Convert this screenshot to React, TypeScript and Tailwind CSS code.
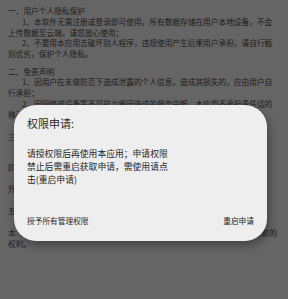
const bgFont = { fontFamily: '"Noto Sans CJK SC", "Noto Sans", sans-serif' };

function Line({ children, indent = false, className = '' }: { children: React.ReactNode; indent?: boolean; className?: string }) {
  return (
    <div className={`h-[10.8px] leading-[10.8px] whitespace-nowrap ${indent ? 'pl-[14px]' : ''} ${className}`}>
      {children}
    </div>
  );
}

function PermissionDialog() {
  return (
    <div className="absolute left-[14px] top-[105px] w-[253px] rounded-[22px] bg-[#eeeeee] pt-[11px] pb-[15px] px-[13px] shadow-[2px_4px_10px_rgba(0,0,0,0.35)]">
      <div className="text-[11px] leading-[14px] text-[#2a2a2a]">权限申请:</div>
      <div className="mt-[17px] text-[8.8px] leading-[13px] text-[#1e1e1e]">
        <div className="whitespace-nowrap">请授权限后再使用本应用；申请权限</div>
        <div className="whitespace-nowrap">禁止后需重启获取申请，需使用请点</div>
        <div className="whitespace-nowrap">击(重启申请)</div>
      </div>
      <div className="mt-[30px] flex justify-between text-[7.7px] leading-[10px] text-[#2a2a2a]">
        <span>授予所有管理权限</span>
        <span>重启申请</span>
      </div>
    </div>
  );
}

export default function App() {
  return (
    <div className="relative w-[288px] h-[299px] overflow-hidden bg-[#656565]" style={bgFont}>
      <div className="pl-[8px] pt-[6px] text-[7.7px] text-[#1c1c1c]">
        <Line>一、用户个人隐私保护</Line>
        <Line indent>1、本软件无需注册或登录即可使用，所有数据存储在用户本地设备，不会</Line>
        <Line>上传数据至云端，请您放心使用；</Line>
        <Line indent>2、不要用本应用去破坏别人程序，违规使用产生后果用户承担，请自行甄</Line>
        <Line>别优劣，保护个人隐私。</Line>

        <Line className="mt-[6.6px]">二、免责声明</Line>
        <Line indent>1、因用户在未做防范下造成泄露的个人信息，造成其损失的，应由用户自</Line>
        <Line>行承担；</Line>
        <Line indent>2、因网络或设备等不可抗力原因造成的服务中断，本应用不承担责任话的</Line>
        <Line>移动数据损失。</Line>

        <Line className="mt-[11px]">三、权限说明</Line>
        <Line indent>本应用仅申请必要的权限，用于保存与读取用户数据。</Line>

        <Line className="mt-[9.6px]">四、服务变更</Line>
        <Line indent>本应用可能根据需要进行更新，以</Line>
        <Line>升级功能与体验。</Line>

        <Line className="mt-[11px]">五、其他</Line>
        <Line className="mt-[11px]">本《隐私政策》最终解释权归本应用所有，本应用保留修改《隐私政策》条款的</Line>
        <Line>权利。</Line>
      </div>
      <PermissionDialog />
    </div>
  );
}
